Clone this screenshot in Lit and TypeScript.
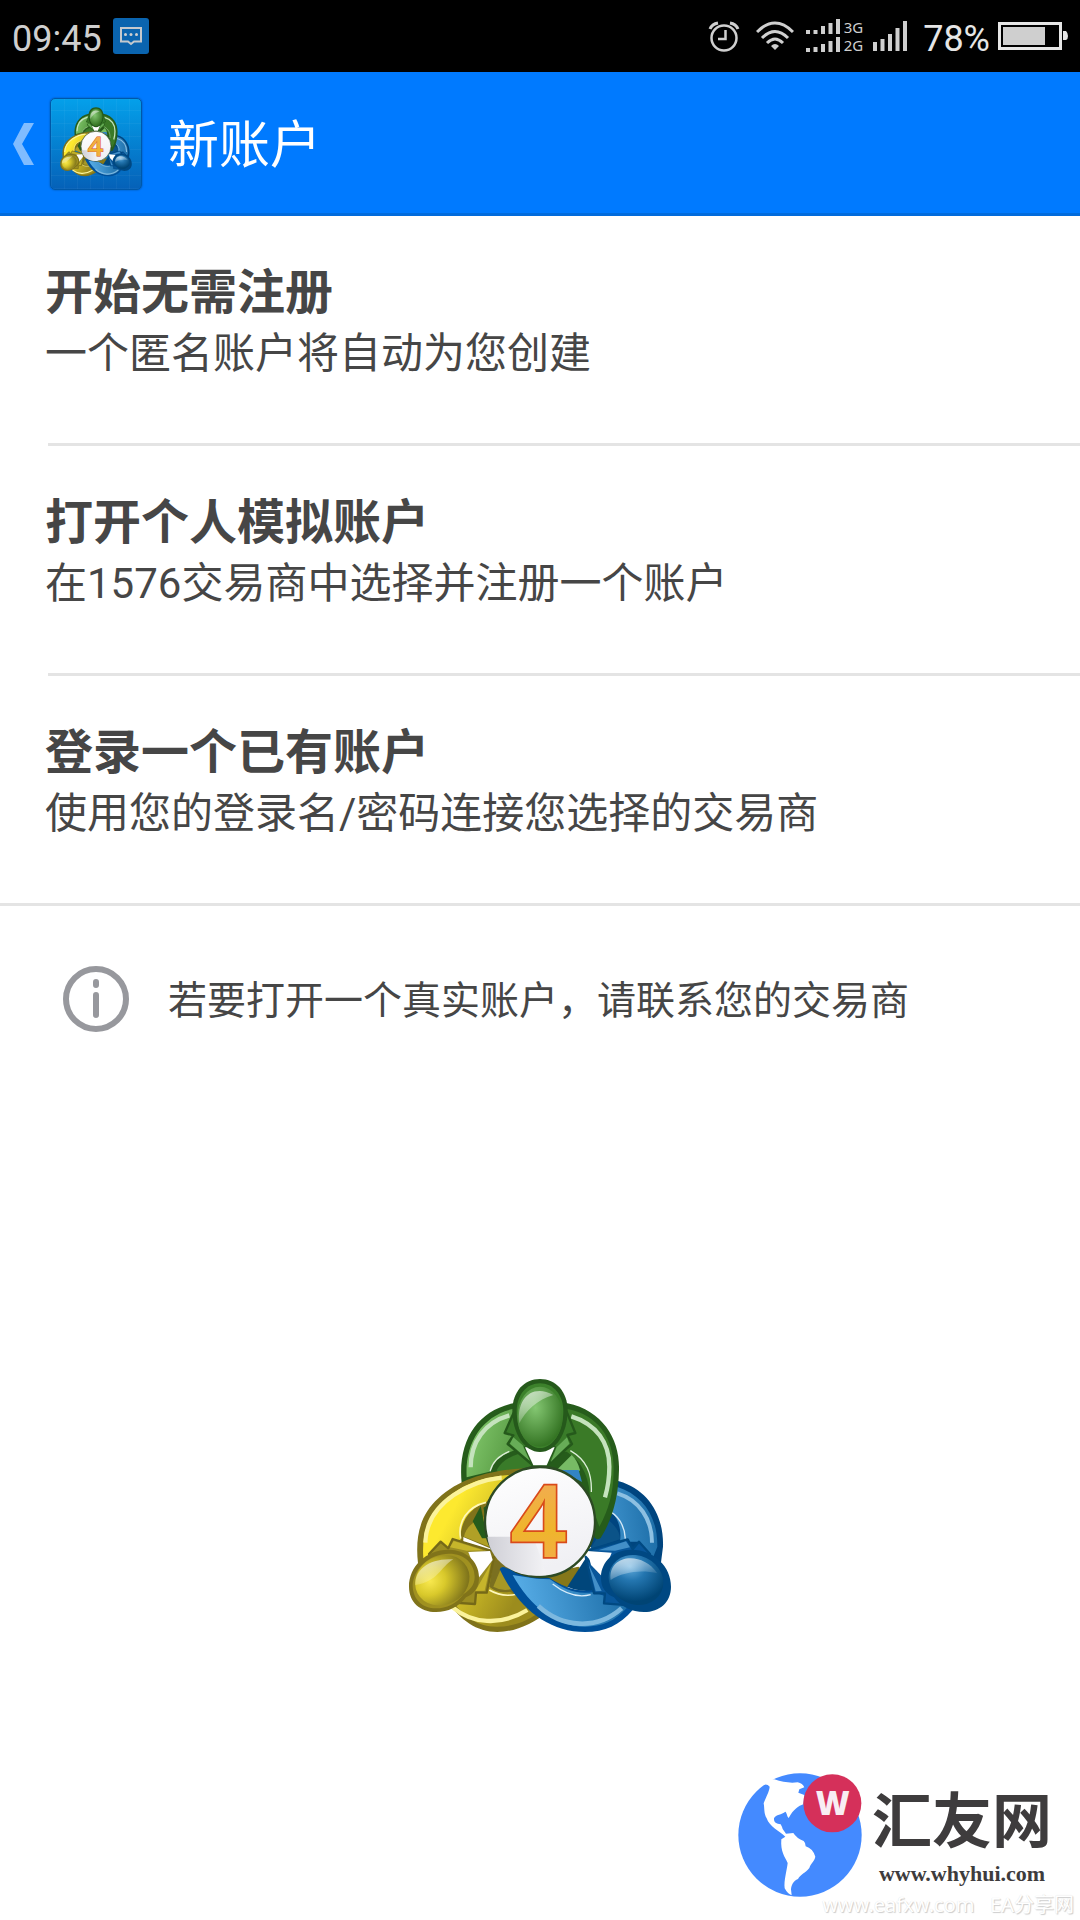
import { LitElement, html, css, svg } from "lit";
import { customElement } from "lit/decorators.js";

/* Three linked figures around a numbered disc. */
@customElement("brand-emblem")
class BrandEmblem extends LitElement {
  static styles = css`
    :host { display: block; }
    .art { display: block; width: 100%; height: auto; }
    .digit { font-family: "Open Sans", "Liberation Sans", sans-serif; font-weight: 600; font-size: 300px; paint-order: stroke; }
  `;
  render() {
    return html`<svg class="art" viewBox="0 0 900 870" role="img" aria-label="4">
      <defs>
        <linearGradient id="g" x1="0" y1="0.3" x2="0.75" y2="0.5"><stop offset="0" stop-color="#7fc569"/><stop offset="0.75" stop-color="#3a7a27"/></linearGradient>
        <linearGradient id="y" x1="0.1" y1="0.3" x2="0.8" y2="0.8"><stop offset="0.1" stop-color="#fde92f"/><stop offset="1" stop-color="#9c8c1d"/></linearGradient>
        <linearGradient id="b" x1="0" y1="0.5" x2="1" y2="0.4"><stop offset="0" stop-color="#5ab0ea"/><stop offset="1" stop-color="#1b6ca6"/></linearGradient>
        <radialGradient id="gh" cx="0.4" cy="0.35" r="0.65"><stop offset="0" stop-color="#84c772"/><stop offset="1" stop-color="#357524"/></radialGradient>
        <radialGradient id="yh" cx="0.3" cy="0.4" r="0.7"><stop offset="0" stop-color="#f8e84e"/><stop offset="0.4" stop-color="#d9c92b"/><stop offset="1" stop-color="#80751b"/></radialGradient>
        <radialGradient id="bh" cx="0.3" cy="0.3" r="0.7"><stop offset="0" stop-color="#65aede"/><stop offset="0.4" stop-color="#2476b0"/><stop offset="1" stop-color="#004474"/></radialGradient>
        <linearGradient id="sh" x1="0" y1="0" x2="0.6" y2="1"><stop offset="0" stop-color="#fff" stop-opacity="0.75"/><stop offset="1" stop-color="#fff" stop-opacity="0.05"/></linearGradient>
        <linearGradient id="d" x1="0" y1="0" x2="0.3" y2="1"><stop offset="0" stop-color="#fff"/><stop offset="1" stop-color="#f0f0f4"/></linearGradient>
        <linearGradient id="d2" x1="0" y1="0" x2="1" y2="0"><stop offset="0" stop-color="#cfcfd6"/><stop offset="1" stop-color="#f3f3f6"/></linearGradient>
        <linearGradient id="n" x1="0" y1="0" x2="0" y2="1"><stop offset="0" stop-color="#f3a768"/><stop offset="0.6" stop-color="#efb52c"/><stop offset="1" stop-color="#f6a55c"/></linearGradient>
      </defs>

      <path fill="#00457f" d="M490 328H570L687 364C776 390 822 468 819 560L812 615L690 600L600 560L560 400Z"/>
      <path fill="url(#b)" d="M520 345H570L680 380C760 405 803 470 802 560L790 590L745 545L690 545C696 500 680 465 655 450L580 400Z"/>
      <path fill="none" stroke="#8dc0e2" stroke-width="12" d="M682 400C748 420 786 478 786 548"/>
      <path fill="none" stroke="#d5e9f7" stroke-width="4" d="M660 454C693 474 704 503 706 536"/>
      <path fill="#0b5388" d="M655 480C680 500 690 520 690 538L600 568Z"/>

      <path fill="#265c1b" d="M215 370C202 240 265 152 370 130H532C640 152 690 240 687 330C685 420 665 480 632 534Q624 541 614 534L560 380L380 340L300 370L290 535H276L248 480L270 420Z"/>
      <path fill="url(#g)" d="M230 352C224 250 275 168 368 147H532C625 165 672 235 671 330C670 405 655 450 628 500L600 420C600 345 570 300 530 275L375 270C335 285 305 305 298 335Z"/>
      <path fill="none" stroke="#c5e3bd" stroke-width="13" d="M242 322C242 245 285 187 358 166M544 169C620 193 658 248 658 320C658 355 652 388 645 412"/>
      <path fill="#397b29" d="M320 330Q340 295 385 282L425 318L330 345Z"/>
      <path fill="#77bb65" d="M500 330L545 285Q562 300 570 330L560 345Z"/>
      <path fill="#3284c3" d="M510 330H566L576 366Z"/>
      <path fill="none" stroke="#dceed7" stroke-width="4" d="M300 334C308 304 330 285 358 274M541 272C590 300 606 340 604 396"/>

      <path fill="#80731a" d="M450 325C350 323 225 340 145 415C90 465 75 530 84 610L170 720C210 780 260 816 322 816C375 816 430 790 475 755L565 640Q573 628 565 620L430 650L300 570L220 545C218 500 240 465 285 440Z"/>
      <path fill="url(#y)" d="M400 342C310 345 225 360 160 425C112 470 95 520 100 595L180 715C225 775 265 800 320 800C375 800 420 780 455 750L360 695C310 680 290 600 300 570L212 545C208 485 238 445 290 425L330 370Z"/>
      <path fill="none" stroke="#fbf39b" stroke-width="13" d="M335 353C250 362 110 420 106 548M188 742C245 790 330 800 412 750"/>
      <path fill="none" stroke="#fff8bd" stroke-width="5" d="M212 536C202 485 232 440 288 427M298 690C325 706 350 710 382 702"/>
      <path fill="#80731a" d="M280 440C240 455 218 485 218 530L300 565Z"/>
      <path fill="#b0a026" d="M280 470C242 488 226 508 222 530L298 560Z"/>
      <path fill="#265c1b" d="M272 438L292 535H276L248 484Z"/>
      <path fill="#7b7020" d="M310 600L298 680Q330 708 378 690L340 610Z"/>
      <path fill="#a69825" d="M335 620L310 680Q340 697 375 684Z"/>
      <path fill="#857719" d="M480 655L570 620L530 682Z"/>

      <path fill="#00509a" d="M329 628Q335 615 350 625L480 655C525 682 565 700 602 686L610 590L720 690L728 750C690 795 645 816 585 816C475 816 385 745 329 628Z"/>
      <path fill="url(#b)" d="M368 645L440 656L480 658C525 690 560 705 612 696L700 730L712 742C675 785 635 800 585 800C500 800 420 740 368 645Z"/>
      <path fill="#857719" d="M482 654L566 620L532 680Q505 672 482 654Z"/>
      <path fill="#00467b" d="M532 680L590 590L610 690Q570 696 532 680Z"/>
      <path fill="none" stroke="#7db8df" stroke-width="14" d="M445 738C515 803 620 812 695 745"/>
      <path fill="none" stroke="#d9edfa" stroke-width="4" d="M488 672C530 705 565 714 602 704"/>

      <g stroke-linejoin="round">
        <path fill="#397b29" stroke="#25591b" stroke-width="7" d="M371 158L344 219L370 226L353 252L430 316L405 262L495 262L470 316L546 252L532 225L556 219L530 155Z"/>
        <path fill="#67ac57" d="M370 232L360 251L419 302L398 256ZM531 232L538 251L482 306L500 262Z"/>
        <path fill="#fff" d="M405 262H494L470 316H430Z"/>
        <path fill="#9b8d22" stroke="#756918" stroke-width="7" d="M117 582L152 545L175 565L188 537L302 572L255 585L262 650L312 590L290 698L258 698L255 732L190 728Z"/>
        <path fill="#c6b52b" d="M191 543L280 571L230 572L180 562ZM302 612L284 692L256 693Z"/>
        <path fill="#fff" d="M235 576L300 573L308 600L265 655Z"/>
        <path fill="#08569a" stroke="#004982" stroke-width="7" d="M780 582L747 545L728 568L713 538L590 572L650 585L640 650L587 590L612 700L645 700L642 730L720 736Z"/>
        <path fill="#438fc7" d="M708 544L625 571L675 572L720 562ZM596 614L617 694L635 693Z"/>
        <path fill="#fff" d="M592 573L665 578L637 650L603 615Z"/>
      </g>

      <path fill="#25591b" d="M450 57C498 57 532 95 533 150C533 220 497 276 450 276C403 276 367 220 367 150C368 95 402 57 450 57Z"/>
      <path fill="#3c812b" d="M450 70C490 70 519 104 520 152C520 212 490 264 450 264C410 264 380 212 380 152C381 104 410 70 450 70Z"/>
      <ellipse cx="450" cy="170" rx="68" ry="90" fill="url(#gh)"/>
      <path fill="url(#sh)" d="M388 190C378 115 428 70 490 105C443 117 405 155 388 190Z"/>

      <path fill="#80731a" d="M57 680C57 620 107 570 175 569C225 568 266 602 267 650C268 680 255 700 228 712C205 742 175 756 138 756C90 756 57 726 57 680Z"/>
      <path fill="#a09120" d="M68 677C70 624 120 581 177 581C225 581 254 612 254 651C254 676 238 692 221 702C199 733 169 745 138 745C98 745 69 719 68 677Z"/>
      <ellipse cx="157" cy="661" rx="84" ry="73" fill="url(#yh)" transform="rotate(-28 157 661)"/>
      <path fill="url(#sh)" d="M76 675C74 628 120 593 190 598C150 622 145 665 76 675Z"/>

      <path fill="#004882" d="M843 680C843 620 793 570 725 569C675 568 634 602 633 650C632 680 645 700 672 712C695 742 725 756 762 756C810 756 843 726 843 680Z"/>
      <ellipse cx="738" cy="660" rx="84" ry="73" fill="url(#bh)" transform="rotate(25 738 660)"/>
      <path fill="url(#sh)" d="M662 660C652 585 755 570 802 640C755 628 700 635 662 660Z"/>

      <circle cx="450" cy="486" r="165" fill="url(#d)" stroke="#2d4a24" stroke-width="7"/>
      <path fill="url(#d2)" d="M292 530H430L470 645C370 660 300 600 292 530Z"/>
      <text class="digit" x="446" y="590" text-anchor="middle" fill="url(#n)" stroke="#d94a1a" stroke-width="10">4</text>
    </svg>`;
  }
}

interface Option { title: string; detail: string; }

const OPTIONS: Option[] = [
  { title: "开始无需注册", detail: "一个匿名账户将自动为您创建" },
  { title: "打开个人模拟账户", detail: "在1576交易商中选择并注册一个账户" },
  { title: "登录一个已有账户", detail: "使用您的登录名/密码连接您选择的交易商" },
];

const bar = (x: number, bottom: number, h: number) =>
  svg`<rect x=${x} y=${bottom - h} width="4" height=${h}></rect>`;

@customElement("app-root")
class AppRoot extends LitElement {
  static styles = css`
    :host {
      display: flex;
      flex-direction: column;
      min-height: 100vh;
      background: #fff;
      color: #464646;
      font-family: Roboto, "Noto Sans CJK SC", sans-serif;
    }
    svg { display: block; flex: none; }
    .status {
      display: flex;
      align-items: center;
      height: 72px;
      padding: 0 12px;
      background: #000;
      color: #cfcfcf;
      font-size: 36px;
    }
    .status svg { fill: currentColor; }
    .clock { margin-right: 11px; }
    .clock, .level { padding-top: 6px; }
    .tray { display: flex; align-items: center; margin-left: auto; }
    .alarm { margin-right: 16px; }
    .wifi { margin-right: 12px; }
    .dual { margin-right: 4px; }
    .nets { display: flex; flex-direction: column; margin-right: 10px; font-family: "Noto Sans", sans-serif; font-size: 15px; line-height: 18px; }
    .signal { margin-right: 16px; }
    .level { margin-right: 8px; color: #e6e6e6; }
    .bar {
      box-sizing: border-box;
      display: flex;
      align-items: center;
      height: 144px;
      padding: 3px 12px 0;
      background: #007aff;
      border-bottom: 3px solid #026bdc;
      color: #fff;
    }
    .back {
      display: flex;
      align-items: center;
      gap: 16px;
      margin: 0 26px 0 0;
      padding: 0;
      border: 0;
      background: none;
    }
    .tile {
      box-sizing: border-box;
      width: 92px;
      height: 92px;
      padding: 3px 4px;
      border: 1px solid #0058a8;
      border-radius: 5px;
      background:
        repeating-linear-gradient(90deg, rgba(255,255,255,0.04) 0 1px, transparent 1px 13px),
        repeating-linear-gradient(0deg, rgba(255,255,255,0.04) 0 1px, transparent 1px 13px),
        linear-gradient(#04a0ea, #0561b8);
      box-shadow: 0 0 2px #004c98;
    }
    .heading { margin: 0; padding-top: 4px; font-size: 51px; font-weight: 400; line-height: 60px; }
    .options { margin: 0; padding: 0; list-style: none; border-bottom: 3px solid #e4e4e4; }
    .entry { padding-left: 48px; }
    .entry + .entry .option { border-top: 3px solid #e4e4e4; }
    .option {
      display: flex;
      flex-direction: column;
      box-sizing: border-box;
      width: 100%;
      min-height: 230px;
      margin: 0;
      padding: 46px 0 59px;
      border: 0;
      background: none;
      color: inherit;
      font: inherit;
      text-align: left;
    }
    .entry:first-child .option { min-height: 227px; }
    .title, .detail { display: block; margin-left: -3px; }
    .title { font-size: 48px; font-weight: 700; line-height: 62px; }
    .detail { font-size: 42px; line-height: 60px; }
    .info { display: flex; align-items: center; gap: 39px; padding: 60px 63px; }
    .note { margin: 0; padding-top: 4px; font-size: 39px; line-height: 60px; }
    .art { flex: 1; padding-top: 268px; }
    .emblem { width: 300px; margin: 0 auto; }
    .foot { display: flex; flex-direction: column; align-items: flex-end; padding: 0 6px 3px 0; }
    .site { display: flex; align-items: center; gap: 10px; padding-right: 22px; color: #3e3c3d; text-decoration: none; }
    .mark { font-family: "Open Sans", sans-serif; font-weight: 800; font-size: 98px; }
    .names { display: flex; flex-direction: column; align-items: center; padding-bottom: 10px; }
    .name { font-family: "Noto Sans CJK SC", sans-serif; font-size: 60px; font-weight: 700; line-height: 88px; }
    .url { font-family: "Liberation Serif", serif; font-size: 22px; font-weight: 700; line-height: 26px; }
    .credit {
      margin: -4px 0 0;
      color: #fff;
      font-family: "Noto Sans", "Noto Sans CJK SC", sans-serif;
      font-size: 20px;
      line-height: 24px;
      white-space: pre;
      text-shadow: 1px 1px 1px #ccc, 0 0 1px #ddd;
    }
  `;

  render() {
    return html`
      <div class="status">
        <span class="clock">09:45</span>
        <svg width="36" height="36" viewBox="0 0 36 36">
          <rect width="36" height="36" rx="3" fill="#0a64af"/>
          <path d="M8 10H28V23.500H21L18 26L15 23.500H8Z" fill="none" stroke="#c4c9ce" stroke-width="2"/>
          <circle cx="12.500" cy="16.500" r="1.500"/><circle cx="18" cy="16.500" r="1.500"/><circle cx="23.500" cy="16.500" r="1.500"/>
        </svg>
        <div class="tray">
          <svg class="alarm" width="32" height="32" viewBox="0 0 32 32">
            <g fill="none" stroke="currentColor">
              <circle cx="16" cy="18" r="12.500" stroke-width="2.500"/>
              <path d="M17.500 10V19H10" stroke-width="2.500"/>
              <path d="M2 9Q4 4 10 3M30 9Q28 4 22 3" stroke-width="3"/>
            </g>
          </svg>
          <svg class="wifi" width="38" height="32" viewBox="0 0 38 32">
            <g fill="none" stroke="currentColor" stroke-width="3">
              <path d="M1 12Q19 -6 37 12M6 18Q19 5 32 18M11 23Q19 15 27 23"/>
            </g>
            <path d="M15 26Q19 22 23 26L19 30Z"/>
          </svg>
          <svg class="dual" width="34" height="34" viewBox="0 0 34 34">
            ${[4, 4, 8, 11, 15].map((h, i) => bar(i * 7.5, 15, h))}
            ${[4, 5, 8, 11, 15].map((h, i) => bar(i * 7.5, 33, h))}
          </svg>
          <span class="nets"><span>3G</span><span>2G</span></span>
          <svg class="signal" width="34" height="32" viewBox="0 0 34 32">
            ${[9, 12, 17, 23, 30].map((h, i) => bar(i * 7.5, 31, h))}
          </svg>
          <span class="level">78%</span>
          <svg width="70" height="28" viewBox="0 0 70 28">
            <rect x="1.500" y="1.500" width="61" height="25" fill="none" stroke="#e6e6e6" stroke-width="3"/>
            <rect x="5" y="5" width="42" height="18"/>
            <path d="M65 9H68Q70 11 70 14T68 18H65Z" fill="#e6e6e6"/>
          </svg>
        </div>
      </div>

      <header class="bar">
        <button class="back" aria-label="返回">
          <svg width="22" height="42" viewBox="0 0 22 42"><path fill="#80bcff" d="M12 0H22L10 21L22 42H12L1 21Z"/></svg>
          <span class="tile"><brand-emblem></brand-emblem></span>
        </button>
        <h1 class="heading">新账户</h1>
      </header>

      <ul class="options">
        ${OPTIONS.map((o) => html`
          <li class="entry">
            <button class="option">
              <span class="title">${o.title}</span>
              <span class="detail">${o.detail}</span>
            </button>
          </li>`)}
      </ul>

      <div class="info">
        <svg width="66" height="66" viewBox="0 0 66 66" fill="none" stroke="#97989d" stroke-width="6" stroke-linecap="round">
          <circle cx="33" cy="33" r="30"/><path d="M33 16V19M33 29V49"/>
        </svg>
        <p class="note">若要打开一个真实账户，请联系您的交易商</p>
      </div>

      <div class="art"><brand-emblem class="emblem"></brand-emblem></div>

      <footer class="foot">
        <a class="site" href="#">
          <svg width="124" height="124" viewBox="56 39 372 372">
            <circle cx="242" cy="225" r="185" fill="#448aff"/>
            <path fill="#fff" d="M165 58C190 66 210 70 235 67Q250 70 255 82L240 88L237 98L255 105L252 133C238 138 222 148 208 174C202 168 203 158 198 155C187 165 170 162 164 175C163 188 172 192 184 193Q188 200 190 207L200 221L222 219Q232 235 253 243Q260 250 259 259Q280 265 288 290C285 305 274 310 270 324C258 340 244 342 236 357C222 363 216 375 215 388L217 406Q205 402 196 385C193 362 203 330 205 309C196 290 183 275 186 238L198 230C180 213 150 200 142 175C133 160 136 145 133 130C138 115 150 95 151 80Q143 70 132 75C140 64 152 58 165 58Z"/>
            <circle cx="339" cy="130" r="87" fill="#d5305a"/>
            <text class="mark" x="340" y="165" text-anchor="middle" fill="#f8eef3">W</text>
          </svg>
          <span class="names">
            <span class="name">汇友网</span>
            <span class="url">www.whyhui.com</span>
          </span>
        </a>
        <p class="credit">www.eafxw.com   EA分享网</p>
      </footer>
    `;
  }
}
